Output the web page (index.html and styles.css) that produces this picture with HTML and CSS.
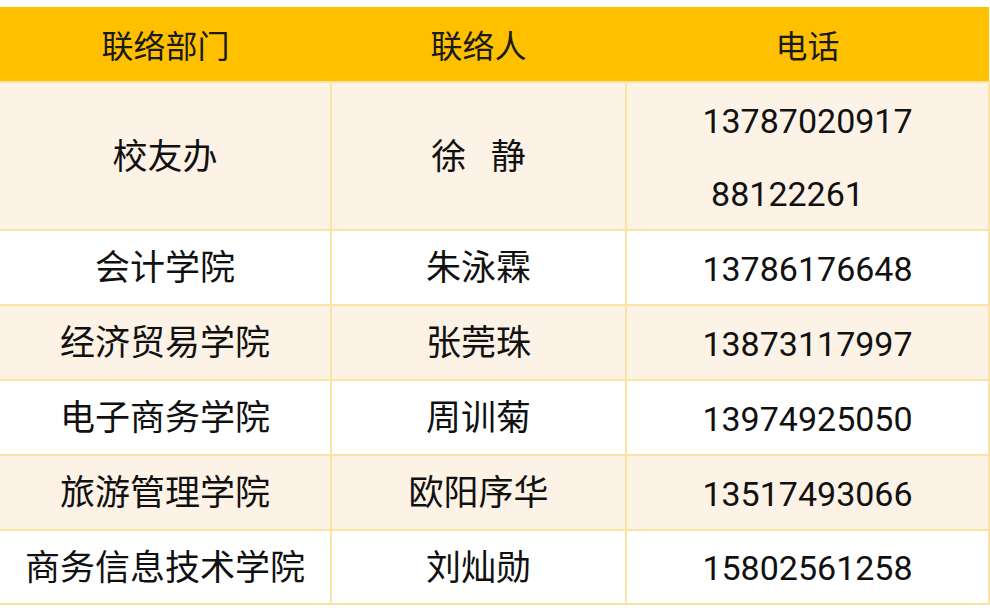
FILE: index.html
```html
<!DOCTYPE html>
<html lang="zh-CN">
<head>
<meta charset="utf-8">
<title>联络表</title>
<link rel="stylesheet" href="styles.css">
</head>
<body>
<table class="contacts">
  <colgroup>
    <col class="c-dept">
    <col class="c-name">
    <col class="c-phone">
  </colgroup>
  <thead>
    <tr class="head">
      <th>联络部门</th>
      <th>联络人</th>
      <th>电话</th>
    </tr>
  </thead>
  <tbody>
    <tr class="tall alt">
      <td>校友办</td>
      <td><span class="spaced">徐 静</span></td>
      <td class="phone multi">
        <div class="line first">13787020917</div>
        <div class="line second">88122261</div>
      </td>
    </tr>
    <tr>
      <td>会计学院</td>
      <td>朱泳霖</td>
      <td class="phone">13786176648</td>
    </tr>
    <tr class="alt">
      <td>经济贸易学院</td>
      <td>张莞珠</td>
      <td class="phone">13873117997</td>
    </tr>
    <tr>
      <td>电子商务学院</td>
      <td>周训菊</td>
      <td class="phone">13974925050</td>
    </tr>
    <tr class="alt">
      <td>旅游管理学院</td>
      <td>欧阳序华</td>
      <td class="phone">13517493066</td>
    </tr>
    <tr class="last">
      <td>商务信息技术学院</td>
      <td>刘灿勋</td>
      <td class="phone">15802561258</td>
    </tr>
  </tbody>
</table>
</body>
</html>
```
FILE: styles.css
```css
html, body {
  margin: 0;
  padding: 0;
  background: #ffffff;
}

body {
  padding-top: 7px;
  font-family: Roboto, "Noto Sans CJK SC", sans-serif;
  color: #111111;
}

.contacts {
  width: 989px;
  border-collapse: collapse;
  table-layout: fixed;
}

.c-dept { width: 331px; }
.c-name { width: 295px; }
.c-phone { width: 363px; }

.head th {
  height: 74px;
  padding: 0;
  background: #ffc000;
  font-weight: 400;
  font-size: 32px;
  color: #1a1a1a;
  text-align: center;
  vertical-align: middle;
  border: none;
  border-bottom: 2px solid #fbe3a4;
}

td {
  height: 70px;
  padding: 3px 0 0;
  font-size: 35px;
  text-align: center;
  vertical-align: middle;
  border: 2px solid #fbe3a4;
  background: #ffffff;
  line-height: 1.2;
}

td:first-child {
  border-left: none;
}

tr.alt td {
  background: #fdf2e6;
}

tr.tall td {
  height: 143px;
}

tr.tall td.multi {
  height: 146px;
  padding: 0;
}

tr.last td {
  height: 69px;
}

.phone {
  font-size: 34px;
}

.line.first {
  height: 76px;
  line-height: 76px;
}

.line.second {
  height: 70px;
  line-height: 70px;
  padding-right: 40px;
}

.spaced {
  word-spacing: 16px;
}
```
